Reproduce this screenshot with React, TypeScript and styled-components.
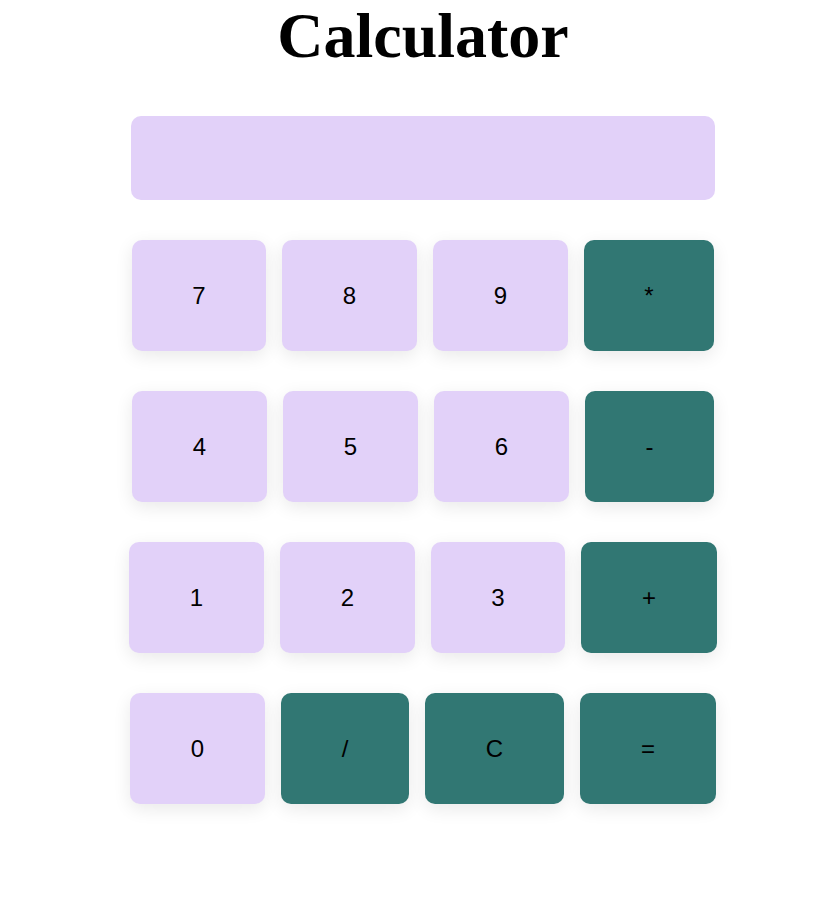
import * as React from 'react';
import styled, { createGlobalStyle } from 'styled-components';

const GlobalStyle = createGlobalStyle`
    body {
        margin: 0;
        background: #ffffff;
    }
`;

const PageStyled = styled.div`
    padding: 0 0 100px 24px;
    display: flex;
    flex-direction: column;
    align-items: center;
`;

const TitleStyled = styled.h1`
    margin: 0 0 45px;
    font-family: "Liberation Serif", "Times New Roman", serif;
    font-size: 64px;
    font-weight: bold;
    line-height: 71px;
    color: #000;
`;

const DisplayStyled = styled.div`
    width: 584px;
    height: 84px;
    background: #e2d1f9;
    border-radius: 10px;
    margin-bottom: 40px;
`;

const KeypadStyled = styled.div`
    display: flex;
    flex-direction: column;
    gap: 40px;
`;

const RowStyled = styled.div`
    display: flex;
    justify-content: center;
    gap: 16px;
`;

const KeyStyled = styled.button<{ $width: number; $op?: boolean }>`
    width: ${p => p.$width}px;
    height: 111px;
    border: none;
    border-radius: 10px;
    background: ${p => (p.$op ? '#317773' : '#e2d1f9')};
    color: #000;
    font-family: "Liberation Sans", Arial, sans-serif;
    font-size: 24px;
    box-shadow: 0 5px 18px rgba(0, 0, 0, 0.09);
    cursor: pointer;
    padding: 0;
`;

interface Key {
    label: string;
    width: number;
    op?: boolean;
}

const rows: Key[][] = [
    [
        { label: '7', width: 134 },
        { label: '8', width: 135 },
        { label: '9', width: 135 },
        { label: '*', width: 130, op: true },
    ],
    [
        { label: '4', width: 135 },
        { label: '5', width: 135 },
        { label: '6', width: 135 },
        { label: '-', width: 129, op: true },
    ],
    [
        { label: '1', width: 135 },
        { label: '2', width: 135 },
        { label: '3', width: 134 },
        { label: '+', width: 136, op: true },
    ],
    [
        { label: '0', width: 135 },
        { label: '/', width: 128, op: true },
        { label: 'C', width: 139, op: true },
        { label: '=', width: 136, op: true },
    ],
];

export default function App() {
    const [value, setValue] = React.useState('');

    const press = (label: string) => {
        if (label === 'C') {
            setValue('');
        } else if (label === '=') {
            try {
                // eslint-disable-next-line no-new-func
                setValue(String(Function(`return (${value})`)()));
            } catch {
                setValue('Error');
            }
        } else {
            setValue(value + label);
        }
    };

    return (
        <>
            <GlobalStyle />
            <PageStyled>
                <TitleStyled>Calculator</TitleStyled>
                <DisplayStyled>{value}</DisplayStyled>
                <KeypadStyled>
                    {rows.map((row, i) => (
                        <RowStyled key={i}>
                            {row.map(k => (
                                <KeyStyled
                                    key={k.label}
                                    $width={k.width}
                                    $op={k.op}
                                    onClick={() => press(k.label)}
                                >
                                    {k.label}
                                </KeyStyled>
                            ))}
                        </RowStyled>
                    ))}
                </KeypadStyled>
            </PageStyled>
        </>
    );
}
